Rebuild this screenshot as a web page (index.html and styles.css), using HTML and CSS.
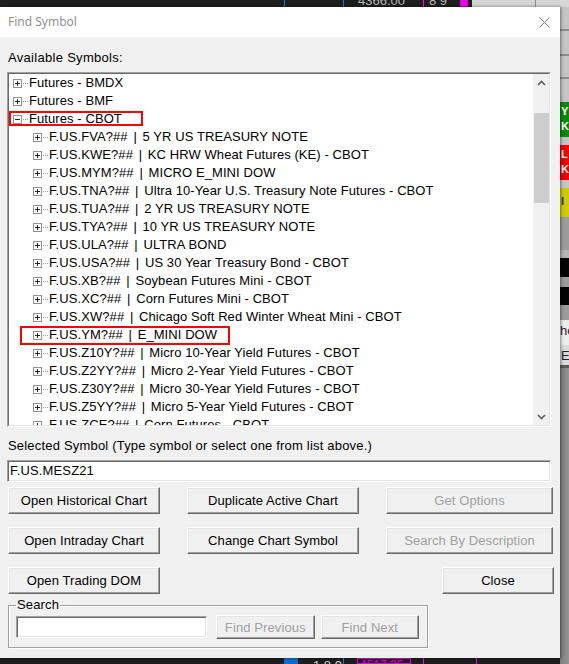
FILE: index.html
```html
<!DOCTYPE html>
<html>
<head>
<meta charset="utf-8">
<title>Find Symbol</title>
<link rel="stylesheet" href="styles.css">
</head>
<body>
<div class="desktop">
  <div class="chart">
    <div class="ticker ticker-top">
      <span class="gap w284"></span>
      <span class="vline blue"></span>
      <span class="gap w58"></span>
      <span class="vline blue"></span>
      <span class="gap w13"></span>
      <span class="tick-text up w66">4366.00</span>
      <span class="vline magenta"></span>
      <span class="gap w4"></span>
      <span class="tick-text up w32">8 9</span>
      <span class="block magenta-bg w8"></span>
      <span class="gap w4"></span>
      <span class="toolbar-strip"><span class="tb-line"></span></span>
    </div>
    <div class="chart-fill"></div>
    <div class="ticker ticker-bottom">
      <span class="gap w284"></span>
      <span class="block blue-bg w14"></span>
      <span class="gap w14"></span>
      <span class="tick-text down w31">1 8 9</span>
      <span class="vline blue"></span>
      <span class="gap w13"></span>
      <span class="tick-box w54">4517 25</span>
      <span class="gap w12"></span>
      <span class="vline magenta"></span>
      <span class="gap w52"></span>
      <span class="vline magenta"></span>
    </div>
  </div>
  <div class="side">
    <div class="s s-top"></div>
    <div class="s s-gray h22"></div>
    <div class="s s-line"></div>
    <div class="s s-gray h23"></div>
    <div class="s s-line"></div>
    <div class="s s-gray h21"></div>
    <div class="s s-line"></div>
    <div class="s s-gray h23"></div>
    <div class="s s-green">Y<br>K</div>
    <div class="s s-gray h8"></div>
    <div class="s s-red">L<br>K</div>
    <div class="s s-gray h8"></div>
    <div class="s s-yellow">I</div>
    <div class="s s-dark h33"></div>
    <div class="s s-mid h8"></div>
    <div class="s s-black h19"></div>
    <div class="s s-dark h10"></div>
    <div class="s s-black h18"></div>
    <div class="s s-dark h15"></div>
    <div class="s s-light">he</div>
    <div class="s s-light2">E</div>
    <div class="s s-rule"></div>
    <div class="s s-rest"></div>
  </div>

  <div class="dialog">
    <div class="titlebar">
      <span class="title">Find Symbol</span>
      <svg class="close" width="11" height="11" viewBox="0 0 11 11"><path d="M0.5 0.5L10.5 10.5M10.5 0.5L0.5 10.5" stroke="#7a7a7a" stroke-width="1"/></svg>
    </div>
    <div class="body">
      <div class="label lbl-avail">Available Symbols:</div>
      <div class="tree">
        <div class="tree-inner">
          <div class="tree-rows">
            <div class="row l0"><svg class="pm" viewBox="0 0 9 9"><use href="#plus"/></svg><span class="dots"></span><span class="txt">Futures - BMDX</span></div>
            <div class="row l0"><svg class="pm" viewBox="0 0 9 9"><use href="#plus"/></svg><span class="dots"></span><span class="txt">Futures - BMF</span></div>
            <div class="row l0"><svg class="pm" viewBox="0 0 9 9"><use href="#minus"/></svg><span class="dots"></span><span class="txt">Futures - CBOT</span></div>
            <div class="row l1"><svg class="pm" viewBox="0 0 9 9"><use href="#plus"/></svg><span class="dots"></span><span class="txt">F.US.FVA?## <span class="sep">|</span> 5 YR US TREASURY NOTE</span></div>
            <div class="row l1"><svg class="pm" viewBox="0 0 9 9"><use href="#plus"/></svg><span class="dots"></span><span class="txt">F.US.KWE?## <span class="sep">|</span> KC HRW Wheat Futures (KE) - CBOT</span></div>
            <div class="row l1"><svg class="pm" viewBox="0 0 9 9"><use href="#plus"/></svg><span class="dots"></span><span class="txt">F.US.MYM?## <span class="sep">|</span> MICRO E_MINI DOW</span></div>
            <div class="row l1"><svg class="pm" viewBox="0 0 9 9"><use href="#plus"/></svg><span class="dots"></span><span class="txt">F.US.TNA?## <span class="sep">|</span> Ultra 10-Year U.S. Treasury Note Futures - CBOT</span></div>
            <div class="row l1"><svg class="pm" viewBox="0 0 9 9"><use href="#plus"/></svg><span class="dots"></span><span class="txt">F.US.TUA?## <span class="sep">|</span> 2 YR US TREASURY NOTE</span></div>
            <div class="row l1"><svg class="pm" viewBox="0 0 9 9"><use href="#plus"/></svg><span class="dots"></span><span class="txt">F.US.TYA?## <span class="sep">|</span> 10 YR US TREASURY NOTE</span></div>
            <div class="row l1"><svg class="pm" viewBox="0 0 9 9"><use href="#plus"/></svg><span class="dots"></span><span class="txt">F.US.ULA?## <span class="sep">|</span> ULTRA BOND</span></div>
            <div class="row l1"><svg class="pm" viewBox="0 0 9 9"><use href="#plus"/></svg><span class="dots"></span><span class="txt">F.US.USA?## <span class="sep">|</span> US 30 Year Treasury Bond - CBOT</span></div>
            <div class="row l1"><svg class="pm" viewBox="0 0 9 9"><use href="#plus"/></svg><span class="dots"></span><span class="txt">F.US.XB?## <span class="sep">|</span> Soybean Futures Mini - CBOT</span></div>
            <div class="row l1"><svg class="pm" viewBox="0 0 9 9"><use href="#plus"/></svg><span class="dots"></span><span class="txt">F.US.XC?## <span class="sep">|</span> Corn Futures Mini - CBOT</span></div>
            <div class="row l1"><svg class="pm" viewBox="0 0 9 9"><use href="#plus"/></svg><span class="dots"></span><span class="txt">F.US.XW?## <span class="sep">|</span> Chicago Soft Red Winter Wheat Mini - CBOT</span></div>
            <div class="row l1"><svg class="pm" viewBox="0 0 9 9"><use href="#plus"/></svg><span class="dots"></span><span class="txt">F.US.YM?## <span class="sep">|</span> E_MINI DOW</span></div>
            <div class="row l1"><svg class="pm" viewBox="0 0 9 9"><use href="#plus"/></svg><span class="dots"></span><span class="txt">F.US.Z10Y?## <span class="sep">|</span> Micro 10-Year Yield Futures - CBOT</span></div>
            <div class="row l1"><svg class="pm" viewBox="0 0 9 9"><use href="#plus"/></svg><span class="dots"></span><span class="txt">F.US.Z2YY?## <span class="sep">|</span> Micro 2-Year Yield Futures - CBOT</span></div>
            <div class="row l1"><svg class="pm" viewBox="0 0 9 9"><use href="#plus"/></svg><span class="dots"></span><span class="txt">F.US.Z30Y?## <span class="sep">|</span> Micro 30-Year Yield Futures - CBOT</span></div>
            <div class="row l1"><svg class="pm" viewBox="0 0 9 9"><use href="#plus"/></svg><span class="dots"></span><span class="txt">F.US.Z5YY?## <span class="sep">|</span> Micro 5-Year Yield Futures - CBOT</span></div>
            <div class="row l1"><svg class="pm" viewBox="0 0 9 9"><use href="#plus"/></svg><span class="dots"></span><span class="txt">F.US.ZCE?## <span class="sep">|</span> Corn Futures - CBOT</span></div>
          </div>
          <div class="vscroll">
            <div class="sb-btn"><svg width="9" height="6" viewBox="0 0 9 6"><path d="M1 5L4.5 1.5L8 5" fill="none" stroke="#606060" stroke-width="1.7"/></svg></div>
            <div class="sb-track"><div class="sb-thumb"></div></div>
            <div class="sb-btn"><svg width="9" height="6" viewBox="0 0 9 6"><path d="M1 1L4.5 4.5L8 1" fill="none" stroke="#606060" stroke-width="1.7"/></svg></div>
          </div>
          <div class="mark mark-cbot"></div>
          <div class="mark mark-ym"></div>
        </div>
      </div>

      <div class="label lbl-sel">Selected Symbol (Type symbol or select one from list above.)</div>
      <div class="textbox sel-box">F.US.MESZ21</div>

      <div class="btn-grid">
        <button class="btn">Open Historical Chart</button>
        <button class="btn">Duplicate Active Chart</button>
        <button class="btn disabled">Get Options</button>
        <button class="btn">Open Intraday Chart</button>
        <button class="btn">Change Chart Symbol</button>
        <button class="btn disabled">Search By Description</button>
        <button class="btn">Open Trading DOM</button>
        <span></span>
        <button class="btn btn-close">Close</button>
      </div>

      <fieldset class="search">
        <legend>Search</legend>
        <div class="search-row">
          <div class="textbox search-box"></div>
          <button class="btn disabled btn-prev">Find Previous</button>
          <button class="btn disabled btn-next">Find Next</button>
        </div>
      </fieldset>
    </div>
  </div>
</div>
<svg class="defs" width="0" height="0">
  <symbol id="plus" viewBox="0 0 9 9">
    <rect x="0.5" y="0.5" width="8" height="8" fill="#fff" stroke="#919191"/>
    <path d="M2 4.5h5M4.5 2v5" stroke="#222" stroke-width="1"/>
  </symbol>
  <symbol id="minus" viewBox="0 0 9 9">
    <rect x="0.5" y="0.5" width="8" height="8" fill="#fff" stroke="#919191"/>
    <path d="M2 4.5h5" stroke="#222" stroke-width="1"/>
  </symbol>
</svg>
</body>
</html>
```

FILE: styles.css
```css
* { box-sizing: border-box; }
html, body { margin: 0; padding: 0; }
body {
  width: 569px;
  height: 664px;
  overflow: hidden;
  background: #1e1e1e;
  font-family: "Liberation Sans", Arial, sans-serif;
  font-size: 13px;
  color: #000;
}
.desktop {
  position: relative;
  width: 569px;
  height: 664px;
  display: grid;
  grid-template-columns: 560px 9px;
}

/* background chart */
.chart { display: flex; flex-direction: column; background: #1e1e1e; }
.chart-fill { flex: 1; }
.ticker { display: flex; overflow: hidden; flex: none; }
.ticker-top { height: 7px; }
.ticker-bottom { height: 6px; }
.gap { flex: none; }
.w4 { width: 4px; } .w8 { width: 8px; } .w12 { width: 12px; } .w13 { width: 13px; }
.w14 { width: 14px; } .w31 { width: 31px; } .w32 { width: 32px; } .w52 { width: 52px; }
.w54 { width: 54px; } .w58 { width: 58px; } .w66 { width: 66px; } .w284 { width: 284px; }
.vline { flex: none; width: 1px; }
.blue { background: #1a78d8; }
.magenta { background: #ff00ff; }
.block { flex: none; }
.blue-bg { background: #0a6cd0; }
.magenta-bg { background: #e800e8; }
.tick-text {
  flex: none;
  font-size: 13px;
  line-height: 13px;
  color: #b8b8b8;
  white-space: nowrap;
  overflow: hidden;
  padding-left: 1px;
}
.tick-text.up { margin-top: -6px; }
.tick-text.down { margin-top: 1px; color: #d0d0d0; }
.tick-box {
  flex: none;
  border: 1px solid #e000e0;
  color: #e000e0;
  font-size: 12px;
  line-height: 12px;
  padding-left: 2px;
  white-space: nowrap;
  overflow: hidden;
}
.toolbar-strip {
  flex: 1;
  background: #d4d4d4;
  display: flex;
  padding-left: 63px;
}
.tb-line { width: 1px; background: #8a8a8a; }

/* right side of the app */
.side {
  display: flex;
  flex-direction: column;
  background: #c4c4c4;
  overflow: hidden;
  font-size: 11px;
  font-weight: bold;
  line-height: 15px;
}
.s { flex: none; padding-left: 1px; white-space: nowrap; }
.s-top { height: 7px; background: #d6d6d6; }
.s-gray { background: #c4c4c4; }
.s-line { height: 2px; background: #8c8c8c; }
.h8 { height: 8px; } .h10 { height: 10px; } .h15 { height: 15px; } .h18 { height: 18px; }
.h19 { height: 19px; } .h21 { height: 21px; } .h22 { height: 22px; } .h23 { height: 23px; }
.h33 { height: 33px; }
.s-green { height: 35px; background: #0a8a0a; color: #fff; padding-top: 2px; }
.s-red { height: 35px; background: #f00000; color: #fff; padding-top: 2px; }
.s-yellow { height: 29px; background: #cccc00; color: #333; padding-top: 6px; }
.s-dark { background: #9c9c9c; }
.s-mid { background: #b4b4b4; }
.s-black { background: #050505; }
.s-light { height: 25px; background: #ececec; color: #302040; font-weight: normal; font-size: 13px; padding-top: 3px; padding-left: 0; }
.s-light2 { height: 20px; background: #dadada; color: #222; font-weight: normal; font-size: 13px; padding-top: 3px; }
.s-rule { height: 3px; background: #5a5a5a; }
.s-rest { flex: 1; background: linear-gradient(90deg, #7c7c7c, #959595); }

/* dialog window (lies over the app) */
.dialog {
  position: absolute;
  left: 0;
  top: 7px;
  width: 560px;
  height: 651px;
  background: #f0f0f0;
  display: flex;
  flex-direction: column;
  box-shadow: 1px 0 3px rgba(0, 0, 0, 0.45);
}
.titlebar {
  height: 30px;
  flex: none;
  background: #fff;
  display: flex;
  align-items: center;
  justify-content: space-between;
  padding: 0 10px 0 8px;
}
.title {
  font-family: "Noto Sans", "Open Sans", sans-serif;
  font-size: 12px;
  color: #8f8f8f;
  line-height: 16px;
}
.close { display: block; margin-top: 1px; }

.body { flex: 1; padding: 0 8px; }
.label { line-height: 16px; font-size: 13px; white-space: nowrap; letter-spacing: 0.19px; }
.lbl-avail { margin-top: 13px; letter-spacing: 0.3px; }
.lbl-sel { margin-top: 11px; }

/* tree view */
.tree {
  margin: 6px 0 0 -1px;
  width: 544px;
  height: 355px;
  border: 1px solid;
  border-color: #a0a0a0 #fff #fff #a0a0a0;
}
.tree-inner {
  position: relative;
  height: 100%;
  border: 1px solid;
  border-color: #696969 #e3e3e3 #e3e3e3 #696969;
  background: #fff;
  display: flex;
}
.tree-rows { flex: 1; overflow: hidden; letter-spacing: 0.08px; }
.row {
  height: 18px;
  display: flex;
  align-items: center;
  white-space: nowrap;
  line-height: 18px;
}
.l0 { padding-left: 4px; }
.l1 { padding-left: 24px; }
.pm { flex: none; width: 9px; height: 9px; margin-right: 1px; display: block; }
.dots { flex: none; width: 5px; height: 0; border-top: 1px dotted #9a9a9a; margin-right: 1px; }
.txt { flex: none; }
.sep { margin: 0 2px; }

.vscroll {
  flex: none;
  width: 16px;
  background: #f0f0f0;
  display: flex;
  flex-direction: column;
}
.sb-btn {
  flex: none;
  height: 17px;
  display: flex;
  align-items: center;
  justify-content: center;
  padding-left: 1px;
}
.sb-track { flex: 1; padding-top: 22px; padding-left: 1px; }
.sb-thumb { height: 90px; background: #cdcdcd; }

.mark {
  position: absolute;
  border: 2px solid #ff0000;
}
.mark-cbot { left: 0; top: 37px; width: 134px; height: 15px; }
.mark-ym { left: 11px; top: 252px; width: 210px; height: 19px; }

/* text boxes */
.textbox {
  background: #fff;
  border: 1px solid;
  border-color: #a0a0a0 #fff #fff #a0a0a0;
  box-shadow: inset 1px 1px 0 #696969, inset -1px -1px 0 #e3e3e3;
  font-size: 13px;
  line-height: 20px;
  padding-left: 2px;
  white-space: nowrap;
  letter-spacing: 0.15px;
}
.sel-box { margin: 6px 0 0 -1px; width: 544px; height: 22px; }

/* buttons */
.btn {
  font-family: "Liberation Sans", Arial, sans-serif;
  font-size: 13px;
  letter-spacing: 0.1px;
  color: #000;
  background: #f0f0f0;
  border: 1px solid;
  border-color: #fff #696969 #696969 #fff;
  box-shadow: inset -1px -1px 0 #a0a0a0, inset 1px 1px 0 #e3e3e3;
  padding: 0;
  margin: 0;
  height: 27px;
  white-space: nowrap;
}
.btn.disabled { color: #a0a0a0; }
.btn-grid {
  margin-top: 5px;
  display: grid;
  grid-template-columns: 152px 172px 167px;
  grid-auto-rows: 27px;
  column-gap: 27px;
  row-gap: 13px;
}
.btn-close { width: 112px; justify-self: end; margin-right: -1px; }

/* search group */
.search {
  margin: 3px 0 0 0;
  width: 420px;
  min-width: 0;
  padding: 2px 8px 8px 7px;
  border: 1px solid #a0a0a0;
  box-shadow: 1px 1px 0 #fff, inset 1px 1px 0 #fff;
}
.search legend {
  padding: 0 1px;
  font-size: 13px;
  line-height: 16px;
  letter-spacing: 0.15px;
}
.search-row { display: flex; align-items: center; height: 24px; }
.search-box { width: 191px; height: 22px; flex: none; }
.btn-prev { width: 100px; height: 24px; margin-left: 9px; }
.btn-next { width: 100px; height: 24px; margin-left: 6px; }

.defs { display: block; width: 0; height: 0; overflow: hidden; }
```
